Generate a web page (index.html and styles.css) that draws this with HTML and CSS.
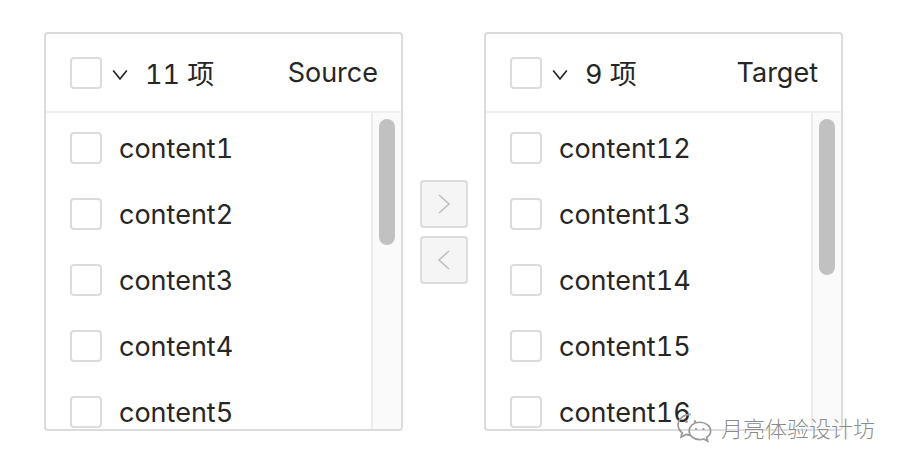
FILE: index.html
```html
<!DOCTYPE html>
<html lang="zh">
<head>
<meta charset="utf-8">
<title>Transfer</title>
<link rel="stylesheet" href="styles.css">
</head>
<body>
<div class="transfer">
  <div class="panel">
    <div class="header">
      <span class="checkbox"></span>
      <svg class="caret" width="16" height="13" viewBox="0 0 16 13"><path d="M1.2 2.5 L8 11 L14.8 2.5" fill="none" stroke="#262626" stroke-width="1.7"/></svg>
      <span class="count">11 项</span>
      <span class="title">Source</span>
    </div>
    <div class="body">
      <ul class="list">
        <li class="item"><span class="checkbox"></span><span class="label">content1</span></li>
        <li class="item"><span class="checkbox"></span><span class="label">content2</span></li>
        <li class="item"><span class="checkbox"></span><span class="label">content3</span></li>
        <li class="item"><span class="checkbox"></span><span class="label">content4</span></li>
        <li class="item"><span class="checkbox"></span><span class="label">content5</span></li>
      </ul>
      <div class="track"><div class="thumb thumb-left"></div></div>
    </div>
  </div>
  <div class="ops">
    <button class="op" type="button"><svg width="14" height="22" viewBox="0 0 14 22"><path d="M2 2 L12 11 L2 20" fill="none" stroke="#bfbfbf" stroke-width="1.6"/></svg></button>
    <button class="op" type="button"><svg width="14" height="22" viewBox="0 0 14 22"><path d="M12 2 L2 11 L12 20" fill="none" stroke="#bfbfbf" stroke-width="1.6"/></svg></button>
  </div>
  <div class="panel">
    <div class="header">
      <span class="checkbox"></span>
      <svg class="caret" width="16" height="13" viewBox="0 0 16 13"><path d="M1.2 2.5 L8 11 L14.8 2.5" fill="none" stroke="#262626" stroke-width="1.7"/></svg>
      <span class="count">9 项</span>
      <span class="title">Target</span>
    </div>
    <div class="body">
      <ul class="list">
        <li class="item"><span class="checkbox"></span><span class="label">content12</span></li>
        <li class="item"><span class="checkbox"></span><span class="label">content13</span></li>
        <li class="item"><span class="checkbox"></span><span class="label">content14</span></li>
        <li class="item"><span class="checkbox"></span><span class="label">content15</span></li>
        <li class="item"><span class="checkbox"></span><span class="label">content16</span></li>
      </ul>
      <div class="track"><div class="thumb thumb-right"></div></div>
    </div>
  </div>
</div>
<div class="watermark">
  <svg class="wx" width="38" height="32" viewBox="0 0 36 30">
    <g fill="none" stroke="#9a9a9a" stroke-width="1.6">
      <path d="M14 3 C7 3 2 7.5 2 13 C2 16 3.5 18.5 6 20.3 L4.8 24.5 L9.5 22 C11 22.5 12.4 22.8 14 22.8"/>
      <path d="M22.5 10.5 C16.5 10.5 12.5 14.2 12.5 18.7 C12.5 23.2 16.5 26.9 22.5 26.9 C23.8 26.9 25 26.7 26.2 26.3 L30 28.3 L29 24.8 C31.4 23.3 32.8 21.1 32.8 18.7 C32.8 14.2 28.5 10.5 22.5 10.5 Z"/>
    </g>
    <g fill="#9a9a9a">
      <circle cx="10" cy="10" r="1.3"/><circle cx="18" cy="10" r="1.3"/>
      <circle cx="19" cy="17" r="1.1"/><circle cx="26" cy="17" r="1.1"/>
    </g>
  </svg>
  <span class="wm-text">月亮体验设计坊</span>
</div>
</body>
</html>
```
FILE: styles.css
```css
* { box-sizing: border-box; }
html, body { margin: 0; padding: 0; background: #fff; }
body {
  width: 904px;
  height: 470px;
  overflow: hidden;
  font-family: Inter, "Noto Sans CJK SC", sans-serif;
  font-variant-numeric: tabular-nums;
  color: #262626;
  position: relative;
}
.transfer {
  display: flex;
  align-items: center;
  padding: 32px 0 0 44px;
}
.panel {
  width: 359px;
  height: 399px;
  border: 2px solid #dcdcdc;
  border-radius: 4px;
  display: flex;
  flex-direction: column;
  overflow: hidden;
}
.header {
  height: 79px;
  flex: none;
  border-bottom: 2px solid #f0f0f0;
  display: flex;
  align-items: center;
  padding: 0 23px 0 24px;
  font-size: 27px;
}
.checkbox {
  width: 32px;
  height: 32px;
  border: 2px solid #dcdcdc;
  border-radius: 4px;
  flex: none;
  background: #fff;
}
.caret { margin-left: 10px; flex: none; margin-top: 4px; }
.count { margin-left: 17px; }
.title { margin-left: auto; }
.body {
  flex: 1;
  display: flex;
  min-height: 0;
}
.list {
  flex: 1;
  list-style: none;
  margin: 0;
  padding: 2px 0 0 24px;
  overflow: hidden;
}
.item {
  height: 66px;
  display: flex;
  align-items: center;
  flex: none;
}
.label {
  margin-left: 17px;
  font-size: 27px;
}
.track {
  width: 30px;
  flex: none;
  background: #fafafa;
  border-left: 2px solid #ececec;
  padding: 6px 0 0 6px;
}
.thumb {
  width: 16px;
  background: #c1c1c1;
  border-radius: 8px;
}
.thumb-left { height: 126px; }
.thumb-right { height: 156px; }
.ops {
  display: flex;
  flex-direction: column;
  gap: 8px;
  margin: 0 16px 0 17px;
}
.op {
  width: 48px;
  height: 48px;
  padding: 0;
  background: #f5f5f5;
  border: 2px solid #dcdcdc;
  border-radius: 4px;
  display: flex;
  align-items: center;
  justify-content: center;
}
.watermark {
  position: absolute;
  left: 676px;
  top: 411px;
  display: flex;
  align-items: center;
}
.wx { flex: none; }
.wm-text {
  margin-left: 7px;
  font-family: "Noto Sans CJK SC", sans-serif;
  font-weight: 300;
  font-size: 22px;
  color: #8c8c8c;
  text-shadow: 0 0 2px #fff, 0 0 2px #fff;
}
```
